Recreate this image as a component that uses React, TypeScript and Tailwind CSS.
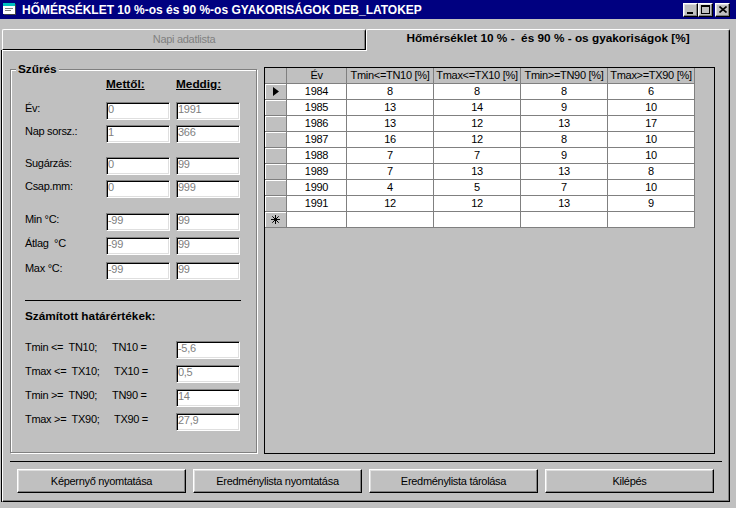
import React from "react";

const headers = ["Év", "Tmin<=TN10 [%]", "Tmax<=TX10 [%]", "Tmin>=TN90 [%]", "Tmax>=TX90 [%]"];

const rows = [
  ["1984", "8", "8", "8", "6"],
  ["1985", "13", "14", "9", "10"],
  ["1986", "13", "12", "13", "17"],
  ["1987", "16", "12", "8", "10"],
  ["1988", "7", "7", "9", "10"],
  ["1989", "7", "13", "13", "8"],
  ["1990", "4", "5", "7", "10"],
  ["1991", "12", "12", "13", "9"],
];

const limits = [
  { a: "Tmin <=  TN10;", b: "TN10 =", v: "-5,6", pad: "pl-0", mt: "mt-[18px]" },
  { a: "Tmax <=  TX10;", b: "TX10 =", v: "0,5", pad: "pl-[2px]", mt: "mt-[6px]" },
  { a: "Tmin >=  TN90;", b: "TN90 =", v: "14", pad: "pl-0", mt: "mt-[6px]" },
  { a: "Tmax >=  TX90;", b: "TX90 =", v: "27,9", pad: "pl-[2px]", mt: "mt-[6px]" },
];

function Field({ value }: { value: string }) {
  return (
    <div className="h-[18px] w-[64px] border border-t-[#808080] border-l-[#808080] border-b-white border-r-white bg-white pl-[1px] leading-[13px] text-[#808080] shadow-[inset_1px_1px_0_#000,inset_-1px_-1px_0_#dfdfdf]">
      {value}
    </div>
  );
}

function FilterRow({ label, a, b, mt }: { label: string; a: string; b: string; mt: string }) {
  return (
    <div className={`${mt} grid grid-cols-[75px_64px_64px] items-start gap-x-[6px]`}>
      <span className="whitespace-pre leading-[13px]">{label}</span>
      <Field value={a} />
      <Field value={b} />
    </div>
  );
}

function Btn({ children }: { children: React.ReactNode }) {
  return (
    <button
      type="button"
      className="flex h-[24px] w-[169px] items-center justify-center border border-t-white border-l-white border-b-black border-r-black shadow-[inset_-1px_-1px_0_#808080,inset_1px_1px_0_#dfdfdf]"
    >
      {children}
    </button>
  );
}

function CapBtn({ children }: { children: React.ReactNode }) {
  return (
    <div className="flex h-[14px] w-[15px] items-center justify-center border border-t-white border-l-white border-b-black border-r-black bg-[#c0c0c0] shadow-[inset_-1px_-1px_0_#808080,inset_1px_1px_0_#dfdfdf]">
      {children}
    </div>
  );
}

function TitleBar() {
  return (
    <div className="flex h-[19px] items-center bg-[#000080] pl-[3px] pr-[6px]">
      <svg width="14" height="13" viewBox="0 0 14 13" shapeRendering="crispEdges">
        <rect x="1" y="1" width="12" height="11" fill="#404040" />
        <rect x="0" y="0" width="12" height="11" fill="#ffffff" />
        <rect x="0" y="0" width="12" height="3" fill="#00c0c0" />
        <rect x="2" y="5" width="8" height="1" fill="#808080" />
        <rect x="2" y="7" width="6" height="1" fill="#808080" />
      </svg>
      <span className="ml-[5px] pt-[1px] text-[12px] font-bold leading-[14px] tracking-normal text-white">
        HŐMÉRSÉKLET 10 %-os és 90 %-os GYAKORISÁGOK DEB_LATOKEP
      </span>
      <div className="ml-auto flex items-center">
        <CapBtn>
          <svg width="8" height="8" viewBox="0 0 8 8" shapeRendering="crispEdges">
            <rect x="0" y="6" width="6" height="2" fill="#000" />
          </svg>
        </CapBtn>
        <CapBtn>
          <svg width="9" height="9" viewBox="0 0 9 9" shapeRendering="crispEdges">
            <rect x="0.5" y="0.5" width="8" height="8" fill="none" stroke="#000" />
            <rect x="0" y="0" width="9" height="2" fill="#000" />
          </svg>
        </CapBtn>
        <div className="ml-[2px]">
          <CapBtn>
            <svg width="8" height="7" viewBox="0 0 8 7">
              <path d="M0.5 0.5 L7.5 6.5 M7.5 0.5 L0.5 6.5" stroke="#000" strokeWidth="1.6" />
            </svg>
          </CapBtn>
        </div>
      </div>
    </div>
  );
}

function Grid() {
  const cell = "flex h-[16px] items-center justify-center border-r border-b border-[#808080] leading-[13px]";
  return (
    <div className="ml-[7px] mt-[16px] h-[387px] w-[451px] shrink-0 border border-black bg-[#c0c0c0]">
      <div className="grid w-fit grid-cols-[22px_60px_87px_87px_87px_87px]">
        <div className={cell} />
        {headers.map((h) => (
          <div key={h} className={`${cell} overflow-hidden whitespace-nowrap`}>
            {h}
          </div>
        ))}
        {rows.map((r, i) => (
          <React.Fragment key={r[0]}>
            <div className={`${cell} shadow-[inset_1px_1px_0_#fff]`}>
              {i === 0 && (
                <svg width="6" height="9" viewBox="0 0 6 9">
                  <polygon points="0,0 6,4.5 0,9" fill="#000" />
                </svg>
              )}
            </div>
            {r.map((c, j) => (
              <div key={j} className={`${cell} bg-white`}>
                {c}
              </div>
            ))}
          </React.Fragment>
        ))}
        <div className={`${cell} shadow-[inset_1px_1px_0_#fff]`}>
          <svg width="9" height="9" viewBox="0 0 9 9">
            <path d="M4.5 0 V9 M0 4.5 H9 M1.3 1.3 L7.7 7.7 M7.7 1.3 L1.3 7.7" stroke="#000" strokeWidth="1" />
          </svg>
        </div>
        {[0, 1, 2, 3, 4].map((k) => (
          <div key={k} className={`${cell} bg-white`} />
        ))}
      </div>
    </div>
  );
}

export default function App() {
  return (
    <div className="h-[508px] w-[736px] overflow-hidden bg-[#c0c0c0] font-['Liberation_Sans',Arial,sans-serif] text-[11px] tracking-[-0.3px] text-black">
      <TitleBar />
      <div className="ml-[2px] mt-[10px] w-[728px]">
        <div className="flex h-[21px] items-start">
          <div className="flex h-[21px] w-[364px] items-center justify-center rounded-t-[2px] border border-t-white border-l-white border-r-black border-b-black pb-[1px] text-[#808080] shadow-[inset_-1px_0_0_#808080]">
            Napi adatlista
          </div>
          <div className="relative z-10 flex h-[22px] w-[364px] items-center justify-center whitespace-pre rounded-t-[2px] border-t border-l border-r border-t-white border-l-white border-r-black bg-[#c0c0c0] pb-[3px] text-[11.8px] font-bold tracking-normal shadow-[inset_-1px_0_0_#808080]">
            Hőmérséklet 10 % -  és 90 % - os gyakoriságok [%]
          </div>
        </div>
        <div className="flex h-[452px] w-[728px] flex-col border border-t-white border-l-white border-r-black border-b-black shadow-[inset_-1px_-1px_0_#808080,-1px_0_0_#000]">
          <div className="flex items-start">
            <div className="ml-[7px] mt-[18px] h-[384px] w-[247px] shrink-0 border border-[#808080] shadow-[inset_1px_1px_0_#fff,1px_1px_0_#fff]">
              <div className="-mt-[8px] ml-[5px] w-fit bg-[#c0c0c0] px-[2px] text-[11.8px] font-bold leading-[14px] tracking-normal">
                Szűrés
              </div>
              <div className="pl-[14px]">
                <div className="mt-px grid grid-cols-[75px_64px_64px] gap-x-[6px] text-[11.8px] font-bold leading-[14px] tracking-normal">
                  <span />
                  <span className="underline">Mettől:</span>
                  <span className="underline">Meddig:</span>
                </div>
                <FilterRow mt="mt-[11px]" label="Év:" a="0" b="1991" />
                <FilterRow mt="mt-[5px]" label="Nap sorsz.:" a="1" b="366" />
                <FilterRow mt="mt-[14px]" label="Sugárzás:" a="0" b="99" />
                <FilterRow mt="mt-[5px]" label="Csap.mm:" a="0" b="999" />
                <FilterRow mt="mt-[15px]" label="Min °C:" a="-99" b="99" />
                <FilterRow mt="mt-[6px]" label="Átlag  °C" a="-99" b="99" />
                <FilterRow mt="mt-[7px]" label="Max °C:" a="-99" b="99" />
                <div className="mt-[20px] h-px w-[216px] bg-black" />
                <div className="mt-[8px] text-[11.8px] font-bold leading-[14px] tracking-normal">
                  Számított határértékek:
                </div>
                {limits.map((l) => (
                  <div key={l.b} className={`${l.mt} flex items-start`}>
                    <span className="w-[87px] whitespace-pre leading-[13px]">{l.a}</span>
                    <span className={`w-[64px] whitespace-pre leading-[13px] ${l.pad}`}>{l.b}</span>
                    <Field value={l.v} />
                  </div>
                ))}
              </div>
            </div>
            <Grid />
          </div>
          <div className="ml-[7px] mt-[7px] h-px w-[712px] bg-black" />
          <div className="ml-[14px] mt-[7px] flex gap-[7px]">
            <Btn>Képernyő nyomtatása</Btn>
            <Btn>Eredménylista nyomtatása</Btn>
            <Btn>Eredménylista tárolása</Btn>
            <Btn>Kilépés</Btn>
          </div>
        </div>
      </div>
    </div>
  );
}
